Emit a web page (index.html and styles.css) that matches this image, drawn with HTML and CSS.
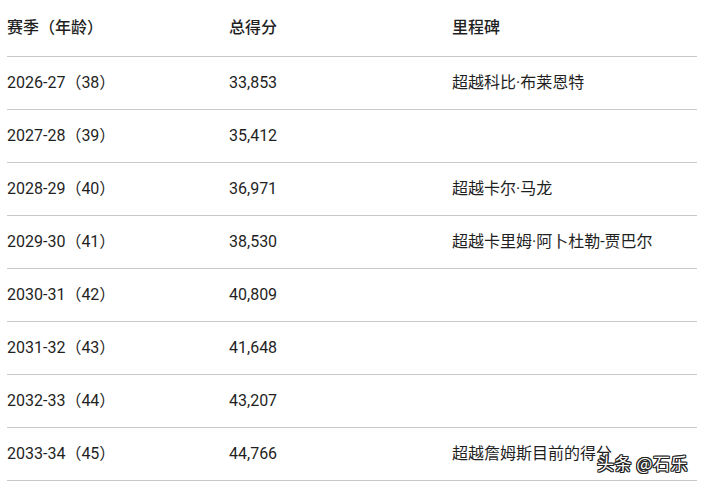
FILE: index.html
```html
<!DOCTYPE html>
<html lang="zh">
<head>
<meta charset="utf-8">
<link rel="stylesheet" href="styles.css">
</head>
<body>
<div class="page">
  <div class="table">
    <div class="row head">
      <div class="cell">赛季（年龄）</div>
      <div class="cell">总得分</div>
      <div class="cell">里程碑</div>
    </div>
    <div class="row">
      <div class="cell">2026-27（38）</div>
      <div class="cell">33,853</div>
      <div class="cell">超越科比·布莱恩特</div>
    </div>
    <div class="row">
      <div class="cell">2027-28（39）</div>
      <div class="cell">35,412</div>
      <div class="cell"></div>
    </div>
    <div class="row">
      <div class="cell">2028-29（40）</div>
      <div class="cell">36,971</div>
      <div class="cell">超越卡尔·马龙</div>
    </div>
    <div class="row">
      <div class="cell">2029-30（41）</div>
      <div class="cell">38,530</div>
      <div class="cell">超越卡里姆·阿卜杜勒-贾巴尔</div>
    </div>
    <div class="row">
      <div class="cell">2030-31（42）</div>
      <div class="cell">40,809</div>
      <div class="cell"></div>
    </div>
    <div class="row">
      <div class="cell">2031-32（43）</div>
      <div class="cell">41,648</div>
      <div class="cell"></div>
    </div>
    <div class="row">
      <div class="cell">2032-33（44）</div>
      <div class="cell">43,207</div>
      <div class="cell"></div>
    </div>
    <div class="row">
      <div class="cell">2033-34（45）</div>
      <div class="cell">44,766</div>
      <div class="cell">超越詹姆斯目前的得分</div>
    </div>
  </div>
  <div class="watermark">头条 @石乐</div>
</div>
</body>
</html>
```

FILE: styles.css
```css
html, body {
  margin: 0;
  padding: 0;
  background: #ffffff;
}
body {
  font-family: Roboto, "Noto Sans CJK SC", "Noto Sans", sans-serif;
  color: #1f1f1f;
  font-size: 16px;
}
.page {
  position: relative;
  width: 702px;
  height: 484px;
  overflow: hidden;
}
.table {
  margin-left: 7px;
  width: 690px;
}
.row {
  display: grid;
  grid-template-columns: 222px 223px 1fr;
  align-items: center;
  height: 52px;
  border-bottom: 1px solid #c9c9c9;
}
.row.head {
  height: 56px;
  font-weight: 500;
}
.cell {
  line-height: 20px;
  white-space: nowrap;
}
.watermark {
  position: absolute;
  left: 597px;
  top: 450px;
  font-family: "Noto Sans CJK SC", sans-serif;
  font-size: 17px;
  color: #ffffff;
  letter-spacing: 0.5px;
  text-shadow: 1px 0 0 #222, -1px 0 0 #222, 0 1px 0 #222, 0 -1px 0 #222, 1px 1px 0 #222, -1px -1px 0 #222, 1px -1px 0 #222, -1px 1px 0 #222;
}
```
